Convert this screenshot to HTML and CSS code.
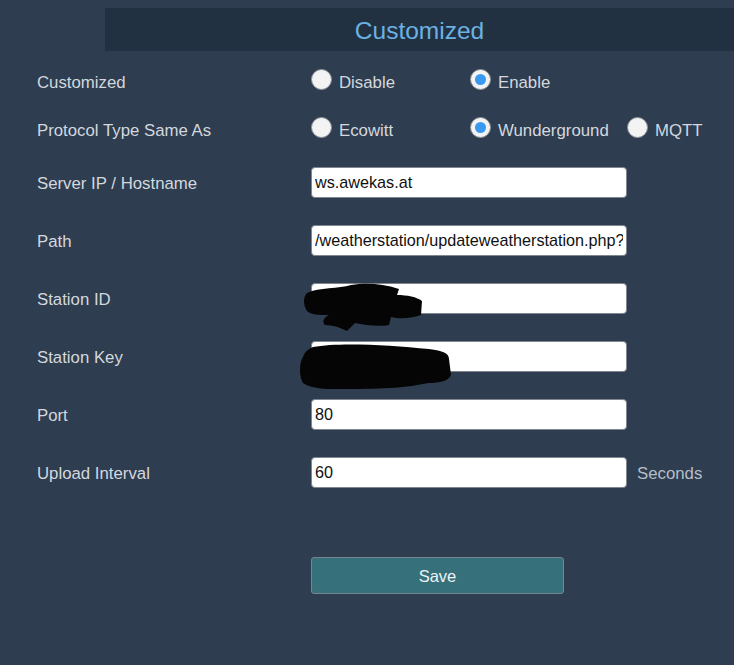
FILE: index.html
```
<!DOCTYPE html>
<html>
<head>
<meta charset="utf-8">
<link rel="stylesheet" href="styles.css">
</head>
<body>
<div class="header">Customized</div>
<div class="form">
  <div class="row radio-row">
    <div class="label">Customized</div>
    <div class="options">
      <label class="opt"><span class="radio"></span><span class="opt-text">Disable</span></label>
      <label class="opt"><span class="radio checked"></span><span class="opt-text">Enable</span></label>
    </div>
  </div>
  <div class="row radio-row">
    <div class="label">Protocol Type Same As</div>
    <div class="options">
      <label class="opt"><span class="radio"></span><span class="opt-text">Ecowitt</span></label>
      <label class="opt"><span class="radio checked"></span><span class="opt-text">Wunderground</span></label>
      <label class="opt"><span class="radio"></span><span class="opt-text">MQTT</span></label>
    </div>
  </div>
  <div class="row input-row">
    <div class="label">Server IP / Hostname</div>
    <div class="field"><input class="text" type="text" value="ws.awekas.at"></div>
  </div>
  <div class="row input-row">
    <div class="label">Path</div>
    <div class="field"><input class="text" type="text" value="/weatherstation/updateweatherstation.php?"></div>
  </div>
  <div class="row input-row">
    <div class="label">Station ID</div>
    <div class="field">
      <input class="text" type="text" value="">
      <svg class="blob blob-id" width="130" height="52" viewBox="0 0 130 52">
        <path d="M8 12 C20 6 40 8 52 4 C66 2 82 2 100 8 L98 14 C108 14 118 16 123 20 L122 34 C110 38 100 38 92 36 L90 44 C80 46 66 44 56 42 L48 50 C40 46 34 44 26 44 C22 40 26 36 30 34 C20 34 12 34 8 30 C4 24 4 16 8 12 Z" fill="#050505"/>
      </svg>
    </div>
  </div>
  <div class="row input-row">
    <div class="label">Station Key</div>
    <div class="field">
      <input class="text" type="text" value="">
      <svg class="blob blob-key" width="160" height="50" viewBox="0 0 160 50">
        <path d="M14 4 C40 -1 90 2 130 6 C144 8 150 10 150 16 L152 32 C150 38 140 40 130 40 L118 42 C100 46 60 46 34 46 C20 46 10 44 4 40 C0 34 0 20 4 14 C6 8 10 6 14 4 Z" fill="#050505"/>
      </svg>
    </div>
  </div>
  <div class="row input-row">
    <div class="label">Port</div>
    <div class="field"><input class="text" type="text" value="80"></div>
  </div>
  <div class="row input-row">
    <div class="label">Upload Interval</div>
    <div class="field"><input class="text" type="text" value="60"><span class="unit">Seconds</span></div>
  </div>
  <div class="actions">
    <button class="save" type="button">Save</button>
  </div>
</div>
</body>
</html>
```
FILE: styles.css
```
* { box-sizing: border-box; }
html, body {
  margin: 0;
  padding: 0;
  background: #2e3d50;
  width: 734px;
  height: 665px;
  overflow: hidden;
  font-family: "Liberation Sans", Arial, sans-serif;
}
.header {
  margin: 8px 0 0 105px;
  height: 43px;
  padding-top: 3px;
  background: #213142;
  color: #6cb1e2;
  font-size: 24.5px;
  display: flex;
  align-items: center;
  justify-content: center;
}
.form {
  padding: 6px 0 0 37px;
}
.row {
  display: grid;
  grid-template-columns: 274px 1fr;
  align-items: center;
}
.radio-row { height: 48px; }
.input-row { height: 58px; }
.label {
  color: #d3d8de;
  font-size: 16.8px;
  padding-top: 4px;
}
.options {
  display: grid;
  grid-template-columns: 159px 157px auto;
  align-items: center;
}
.opt {
  display: flex;
  align-items: center;
  color: #d3d8de;
  font-size: 16.8px;
}
.opt-text {
  padding-top: 4px;
}
.radio {
  width: 21px;
  height: 21px;
  border-radius: 50%;
  background: #f3f3f3;
  border: 1px solid #8d9197;
  margin: -4px 7px 0 0;
  display: flex;
  align-items: center;
  justify-content: center;
}
.radio.checked::after {
  content: "";
  width: 11px;
  height: 11px;
  border-radius: 50%;
  background: #3a98ef;
}
.field {
  position: relative;
  display: flex;
  align-items: center;
}
.text {
  width: 316px;
  height: 31px;
  border: 1px solid #80868e;
  border-radius: 4px;
  background: #fff;
  color: #111;
  font-family: "Liberation Sans", Arial, sans-serif;
  font-size: 16.2px;
  padding: 1px 3px 0;
  outline: none;
}
.unit {
  color: #b5bec8;
  font-size: 16.8px;
  margin-left: 10px;
  padding-top: 3px;
}
.blob {
  position: absolute;
  left: -12px;
}
.blob-id { top: -2px; }
.blob-key { top: 2px; }
.actions {
  padding: 56px 0 0 274px;
}
.save {
  width: 253px;
  height: 37px;
  padding-top: 2px;
  background: #36717b;
  border: 1px solid #76858f;
  border-radius: 3px;
  color: #eef3f6;
  font-family: "Liberation Sans", Arial, sans-serif;
  font-size: 16.5px;
}
```
